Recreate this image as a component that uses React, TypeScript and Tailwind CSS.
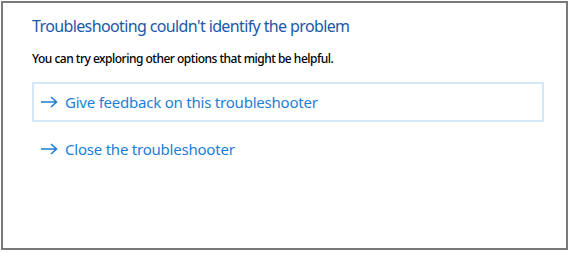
import React from 'react';

const ArrowIcon: React.FC = () => (
  <svg className="w-[18px] h-[12px] shrink-0" viewBox="0 0 18 12" fill="none" stroke="currentColor" strokeWidth={1.6}>
    <path d="M1 6h15.5M11 1l5.5 5-5.5 5" />
  </svg>
);

const App: React.FC = () => {
  return (
    <div className="w-[570px] h-[253px] bg-white p-px font-['Noto_Sans',sans-serif]">
      <div className="w-[567px] h-[249px] border-2 border-[#7a7a7a] pl-[29px] pr-[23px] pt-[11px]">
        <h1 className="text-[16px] leading-[24px] text-[#2157a8] tracking-[-0.62px]">
          Troubleshooting couldn't identify the problem
        </h1>
        <p className="mt-[13px] text-[12px] leading-[16px] text-black font-medium tracking-[-0.5px]">
          You can try exploring other options that might be helpful.
        </p>
        <div className="mt-[15px] flex flex-col">
          <button className="h-[40px] w-[512px] border-2 border-[#d4e7f8] flex items-center gap-[7px] pl-[6px] text-[#1a7fd7] text-[15px] tracking-[-0.22px]">
            <ArrowIcon />
            <span>Give feedback on this troubleshooter</span>
          </button>
          <button className="h-[54px] flex items-center gap-[7px] pl-[8px] text-[#1a7fd7] text-[15px] tracking-[-0.22px]">
            <ArrowIcon />
            <span>Close the troubleshooter</span>
          </button>
        </div>
      </div>
    </div>
  );
};

export default App;
